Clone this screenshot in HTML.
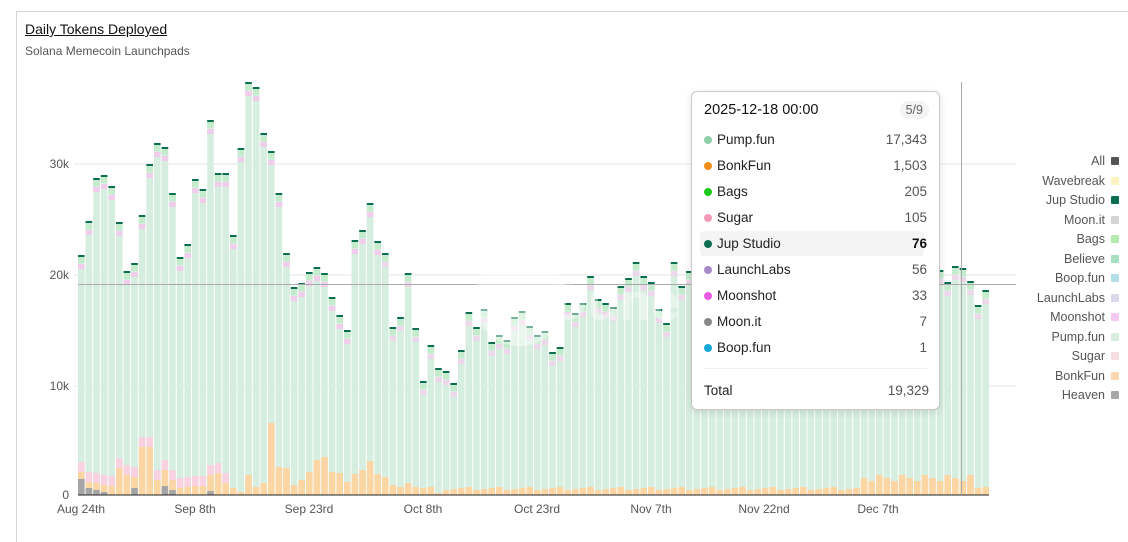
<!DOCTYPE html>
<html><head><meta charset="utf-8">
<style>
body{margin:0;width:1128px;height:522px;overflow:hidden;background:#fff;font-family:"Liberation Sans",sans-serif;position:relative}
.card{position:absolute;left:16px;top:11px;width:1130px;height:530px;border-left:1px solid #d6d6d6;border-top:1px solid #d6d6d6}
.t{position:absolute;left:25px;top:21px;font-size:14px;color:#111;text-decoration:underline}
.s{position:absolute;left:25px;top:44px;font-size:12px;color:#555}
.yl{position:absolute;width:40px;text-align:right;left:29px;font-size:12px;color:#555}
.xl{position:absolute;top:502px;font-size:12px;color:#555;transform:translateX(-50%);white-space:nowrap}
.lg{position:absolute;right:9px;font-size:12.5px;color:#555;white-space:nowrap}
.lg i{display:inline-block;width:8px;height:8px;margin-left:6px;border-radius:1px;vertical-align:0}
.tip{position:absolute;left:691px;top:91px;width:247px;height:317px;background:#fff;border:1px solid #c9c9c9;border-radius:6px;box-shadow:0 2px 8px rgba(0,0,0,.12);font-size:13.5px;color:#222}
.row{position:absolute;left:8px;width:230px;height:25px;line-height:25px}
.row b{display:inline-block;width:8px;height:8px;border-radius:50%;margin:0 5px 0 4px;vertical-align:0}
.row span{position:absolute;right:3px;color:#555}
</style></head><body>
<div class="card"></div>
<div class="t">Daily Tokens Deployed</div>
<div class="s">Solana Memecoin Launchpads</div>
<svg id="ch" width="1128" height="522" style="position:absolute;left:0;top:0"></svg>
<div class="yl" style="top:157px">30k</div>
<div class="yl" style="top:268px">20k</div>
<div class="yl" style="top:379px">10k</div>
<div class="yl" style="top:488px">0</div>
<div class="xl" style="left:81px">Aug 24th</div>
<div class="xl" style="left:195px">Sep 8th</div>
<div class="xl" style="left:309px">Sep 23rd</div>
<div class="xl" style="left:423px">Oct 8th</div>
<div class="xl" style="left:537px">Oct 23rd</div>
<div class="xl" style="left:651px">Nov 7th</div>
<div class="xl" style="left:764px">Nov 22nd</div>
<div class="xl" style="left:878px">Dec 7th</div>
<div class="lg" style="top:154px">All<i style="background:#555"></i></div>
<div class="lg" style="top:174px">Wavebreak<i style="background:#fbf3c0"></i></div>
<div class="lg" style="top:193px">Jup Studio<i style="background:#0c6e50"></i></div>
<div class="lg" style="top:213px">Moon.it<i style="background:#d4d4d4"></i></div>
<div class="lg" style="top:232px">Bags<i style="background:#b4eaae"></i></div>
<div class="lg" style="top:252px">Believe<i style="background:#a6e0c0"></i></div>
<div class="lg" style="top:271px">Boop.fun<i style="background:#b4dfe8"></i></div>
<div class="lg" style="top:291px">LaunchLabs<i style="background:#ddd8ec"></i></div>
<div class="lg" style="top:310px">Moonshot<i style="background:#f5caf0"></i></div>
<div class="lg" style="top:330px">Pump.fun<i style="background:#d8ede0"></i></div>
<div class="lg" style="top:349px">Sugar<i style="background:#f8dce4"></i></div>
<div class="lg" style="top:369px">BonkFun<i style="background:#f9d8ab"></i></div>
<div class="lg" style="top:388px">Heaven<i style="background:#a8a8a8"></i></div>
<div class="tip">
<div style="position:absolute;left:12px;top:10px;font-size:14.5px;font-weight:500;color:#111">2025-12-18 00:00</div>
<div style="position:absolute;right:10px;top:9px;background:#f3f3f3;border-radius:9px;padding:2px 6px;font-size:12.5px;color:#666">5/9</div>
<div class="row" style="top:35px"><b style="background:#8fcfa8"></b>Pump.fun<span>17,343</span></div>
<div class="row" style="top:61px"><b style="background:#f08c1a"></b>BonkFun<span>1,503</span></div>
<div class="row" style="top:87px"><b style="background:#1ec91e"></b>Bags<span>205</span></div>
<div class="row" style="top:113px"><b style="background:#f19ab8"></b>Sugar<span>105</span></div>
<div class="row" style="top:139px;width:224px;background:#f4f4f4;border-radius:4px"><b style="background:#0c6e50"></b>Jup Studio<span style="color:#111;font-weight:bold;right:-3px">76</span></div>
<div class="row" style="top:165px"><b style="background:#a78bc6"></b>LaunchLabs<span>56</span></div>
<div class="row" style="top:191px"><b style="background:#e65ce6"></b>Moonshot<span>33</span></div>
<div class="row" style="top:217px"><b style="background:#888"></b>Moon.it<span>7</span></div>
<div class="row" style="top:243px"><b style="background:#1aa8d8"></b>Boop.fun<span>1</span></div>
<div style="position:absolute;left:12px;right:12px;top:276px;border-top:1px solid #f0f0f0"></div>
<div class="row" style="top:286px;left:12px;width:224px">Total<span style="right:-1px">19,329</span></div>
</div>
<script>
var tops=[255,221,178,175,186,222,271,263,215,164,143,147,193,257,244,179,189,120,173,173,235,148,82,87,133,151,193,253,287,283,272,267,273,297,315,330,240,230,203,241,253,327,317,273,328,381,345,368,371,383,350,312,327,309,342,335,340,317,311,326,335,331,352,347,303,313,303,276,299,303,307,286,278,262,276,282,309,323,262,286,271,
280,285,290,288,282,279,286,292,288,283,280,285,288,290,284,281,278,283,286,289,284,280,276,282,287,285,280,278,275,280,279,283,
270,282,266,268,281,305,290];
var orng=[472,482,483,485,486,468,475,477,447,447,480,470,480,488,487,486,486,475,473,483,488,492,475,487,483,423,467,468,485,480,472,460,457,472,473,482,474,470,461,474,477,485,487,483,487,488,487,493];
var grey={0:479,1:488,2:490,3:492,7:488,11:486,12:490,17:491};
var s='';
[164,275,386].forEach(function(y){s+='<line x1="74" x2="1016" y1="'+y+'" y2="'+y+'" stroke="#e6e6e6"/>';});
for(var i=0;i<tops.length;i++){
 var x=78+i*7.6,w=6.6,t=tops[i],b=495;
 s+='<rect x="'+x+'" y="'+t+'" width="'+w+'" height="'+(b-t)+'" fill="#d6eee0"/>';
 s+='<rect x="'+x+'" y="'+(t+2)+'" width="'+w+'" height="6" fill="#c4ebcc"/>';
 s+='<rect x="'+x+'" y="'+(t+9)+'" width="'+w+'" height="5" fill="'+(i<40?'#f0cdea':'#ecd8ea')+'"/>';
 s+='<rect x="'+x+'" y="'+t+'" width="'+w+'" height="2" fill="#0c6e50"/>';
 var o=i<orng.length?orng[i]:(i>102&&i<118?475+(i%3)*3:490-(i%4));
 if(i<20) s+='<rect x="'+x+'" y="'+(o-10)+'" width="'+w+'" height="10" fill="#f8d2e0"/>';
 s+='<rect x="'+x+'" y="'+o+'" width="'+w+'" height="'+(b-o)+'" fill="#fbd5a3"/>';
 if(grey[i]) s+='<rect x="'+x+'" y="'+grey[i]+'" width="'+w+'" height="'+(b-grey[i])+'" fill="#a5a5a5"/>';
}
s+='<line x1="78" x2="989" y1="495" y2="495" stroke="#222" stroke-width="1"/>';
s+='<line x1="78" x2="1016" y1="284.5" y2="284.5" stroke="#aaa"/>';
s+='<line x1="961.5" x2="961.5" y1="82" y2="495" stroke="#aaa"/>';
s+='<circle cx="520" cy="300" r="46" fill="#fff" opacity=".45"/>';
s+='<text x="550" y="320" font-family="Liberation Sans" font-size="52" font-weight="bold" fill="#fff" opacity=".4">Dune</text>';
document.getElementById('ch').innerHTML=s;
</script>
</body></html>
